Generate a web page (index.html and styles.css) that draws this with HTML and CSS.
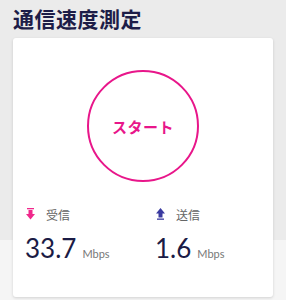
FILE: index.html
```html
<!DOCTYPE html>
<html lang="ja">
<head>
<meta charset="utf-8">
<link rel="stylesheet" href="styles.css">
</head>
<body>
<div class="page">
  <h1 class="title">通信速度測定</h1>
  <div class="card">
    <div class="start-wrap">
      <button class="start">スタート</button>
    </div>
    <div class="stats">
      <div class="stat">
        <div class="label">
          <svg class="arrow" width="9" height="12" viewBox="0 0 9 12"><rect x="1" y="0" width="7" height="1.3" fill="#f0288c"/><rect x="2.5" y="2" width="4" height="5" fill="#f0288c"/><polygon points="0,6 9,6 4.5,11.5" fill="#f0288c"/></svg>
          <span>受信</span>
        </div>
        <div class="value"><span class="num">33.7</span><span class="unit">Mbps</span></div>
      </div>
      <div class="stat">
        <div class="label">
          <svg class="arrow" width="9" height="12" viewBox="0 0 9 12"><polygon points="4.5,0 9,5.5 0,5.5" fill="#3a3aa0"/><rect x="2.5" y="5" width="4" height="4.5" fill="#3a3aa0"/><rect x="1" y="10.5" width="7" height="1.3" fill="#3a3aa0"/></svg>
          <span>送信</span>
        </div>
        <div class="value"><span class="num">1.6</span><span class="unit">Mbps</span></div>
      </div>
    </div>
  </div>
</div>
</body>
</html>
```
FILE: styles.css
```css
* { box-sizing: border-box; }
html, body { margin: 0; padding: 0; }
body {
  width: 286px;
  height: 300px;
  overflow: hidden;
  background: linear-gradient(to bottom, #ebebeb 0, #ebebeb 240px, #f5f5f5 240px);
  font-family: "Noto Sans CJK JP", "Noto Sans", sans-serif;
}
.page {
  padding: 4px 13px 0 13px;
}
.title {
  margin: 0;
  font-size: 21px;
  line-height: 28px;
  font-weight: 700;
  color: #1d1d48;
  letter-spacing: 0.5px;
}
.card {
  margin-top: 6px;
  width: 260px;
  height: 259px;
  background: #fff;
  border-radius: 3px;
  box-shadow: 0 1px 3px rgba(0,0,0,0.15);
  padding: 32px 13px 0 13px;
}
.start-wrap {
  display: flex;
  justify-content: center;
}
.start {
  width: 112px;
  height: 112px;
  border-radius: 50%;
  border: 2px solid #e8168a;
  background: #fff;
  color: #e8168a;
  font-family: "Noto Sans CJK JP", sans-serif;
  font-size: 15px;
  font-weight: 700;
  padding: 0;
  letter-spacing: 0.5px;
}
.stats {
  display: grid;
  grid-template-columns: 130px 1fr;
  margin-top: 26px;
}
.label {
  display: flex;
  align-items: center;
  gap: 11px;
  height: 12px;
  font-size: 12px;
  color: #666;
}
.arrow { display: block; flex: none; }
.value {
  margin-top: 13px;
  display: flex;
  align-items: baseline;
  gap: 6px;
  margin-left: -1px;
}
.num {
  font-family: "Lato", "Noto Sans", sans-serif;
  font-size: 26px;
  line-height: 30px;
  color: #1b1b45;
}
.unit {
  font-family: "Lato", "Noto Sans", sans-serif;
  font-size: 11px;
  color: #777;
}
```
